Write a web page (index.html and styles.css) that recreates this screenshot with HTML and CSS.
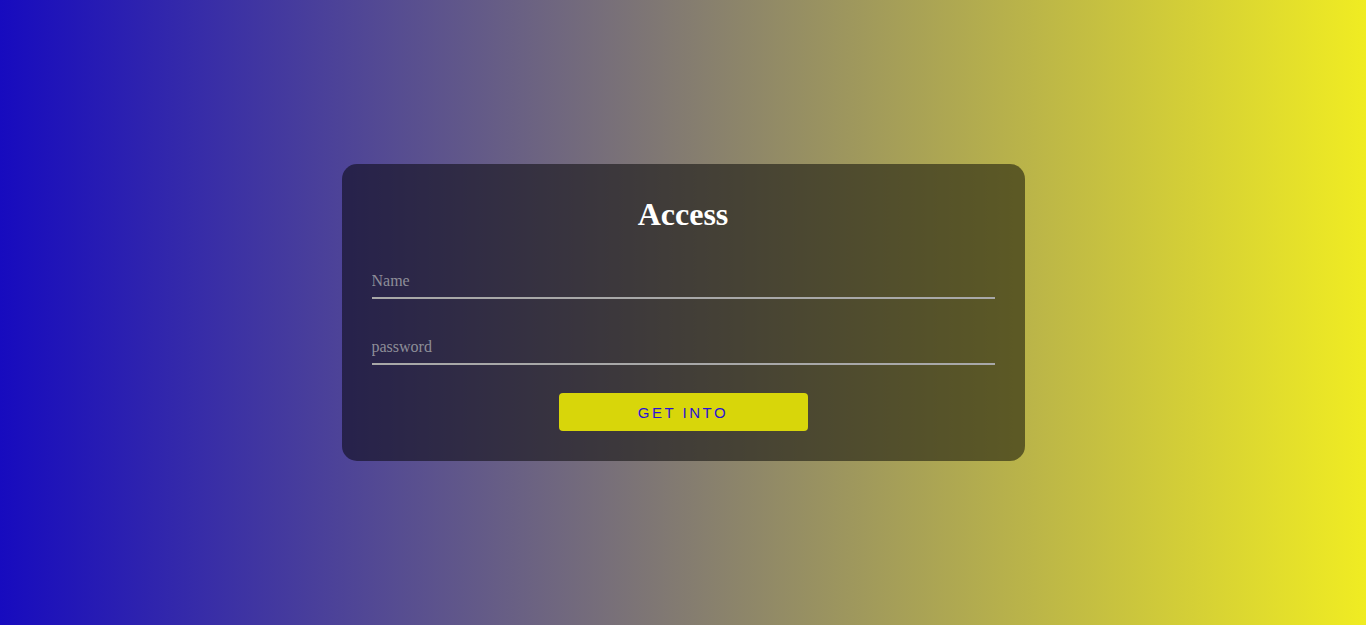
FILE: index.html
```html
<!DOCTYPE html>
<html lang="en">
<head>
<meta charset="utf-8">
<title>Access</title>
<link rel="stylesheet" href="styles.css">
</head>
<body>
<main class="page">
  <form class="card">
    <h1 class="title">Access</h1>
    <input class="field" type="text" placeholder="Name">
    <input class="field" type="password" placeholder="password">
    <button class="btn" type="button">GET INTO</button>
  </form>
</main>
</body>
</html>
```

FILE: styles.css
```css
* { box-sizing: border-box; }
html, body { margin: 0; height: 100%; }
body {
  font-family: "Liberation Serif", "Times New Roman", serif;
  background: linear-gradient(to right, #170bbf, #f0ec22);
}
.page {
  height: 100%;
  display: flex;
  align-items: center;
  justify-content: center;
}
.card {
  width: 683px;
  padding: 30px;
  background: rgba(0, 0, 0, 0.5);
  border-radius: 15px;
  display: flex;
  flex-direction: column;
}
.title {
  margin: 2px 0 28px;
  text-align: center;
  color: #fff;
  font-size: 32px;
  font-weight: bold;
}
.field {
  display: block;
  width: 100%;
  margin: 0 0 28px;
  padding: 11px 0 7px;
  border: none;
  border-bottom: 2px solid #a8a8a8;
  background: transparent;
  outline: none;
  color: #ddd;
  font-family: "Liberation Serif", "Times New Roman", serif;
  font-size: 16px;
  line-height: 18px;
}
.field::placeholder { color: #8e8e98; }
.btn {
  align-self: center;
  width: 249px;
  height: 38px;
  border: none;
  border-radius: 4px;
  background: #d8d60a;
  color: #2a12d6;
  font-family: "Liberation Sans", Arial, sans-serif;
  font-size: 15px;
  letter-spacing: 2.5px;
  padding: 0;
  cursor: pointer;
}
```
